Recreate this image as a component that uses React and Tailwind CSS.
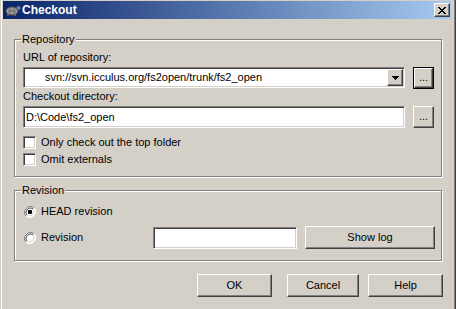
import React from "react";

const raised =
  "border border-t-white border-l-white border-r-[#404040] border-b-[#404040] shadow-[inset_-1px_-1px_0_#808080] bg-[#d4d0c8]";
const sunken =
  "border border-t-[#808080] border-l-[#808080] border-r-white border-b-white shadow-[inset_1px_1px_0_#404040,inset_-1px_-1px_0_#d4d0c8] bg-white";

function Turtle() {
  return (
    <svg width="16" height="14" viewBox="0 0 16 14">
      <ellipse cx="7" cy="8" rx="6" ry="4" fill="#9a9a9a" stroke="#505050" strokeWidth="1" />
      <path d="M3 8h8M5 5.5v5M9 5.5v5" stroke="#6a6a6a" strokeWidth="1" />
      <circle cx="13.5" cy="5" r="2" fill="#7a8aa8" stroke="#404a60" strokeWidth="0.8" />
      <rect x="2" y="11" width="2" height="2" fill="#606060" />
      <rect x="9" y="11" width="2" height="2" fill="#606060" />
    </svg>
  );
}

function CloseGlyph() {
  return (
    <svg width="8" height="7" viewBox="0 0 8 7" shapeRendering="crispEdges">
      <path
        d="M0 0h2v1h-2zM6 0h2v1h-2zM1 1h2v1h-2zM5 1h2v1h-2zM2 2h4v1h-4zM3 3h2v1h-2zM2 4h4v1h-4zM1 5h2v1h-2zM5 5h2v1h-2zM0 6h2v1h-2zM6 6h2v1h-2z"
        fill="#000"
      />
    </svg>
  );
}

function Group({ label, className, children }) {
  return (
    <div
      className={
        "relative ml-[14px] w-[428px] border border-[#808080] shadow-[inset_1px_1px_0_#fff,1px_1px_0_#fff] " +
        className
      }
    >
      <div className="absolute left-[6px] -top-[7px] bg-[#d4d0c8] px-[1px] leading-[13px]">{label}</div>
      {children}
    </div>
  );
}

function Checkbox({ label }) {
  return (
    <div className="flex h-[13px] items-center">
      <div className={"h-[13px] w-[13px] " + sunken} />
      <span className="ml-[5px] leading-[13px]">{label}</span>
    </div>
  );
}

function Radio({ checked }) {
  return (
    <svg width="12" height="12" viewBox="0 0 12 12" className="ml-[1px]">
      <circle cx="6" cy="6" r="5.5" fill="#fff" />
      <path d="M10.2 1.8A6 6 0 0 0 1.8 10.2" stroke="#808080" strokeWidth="1" fill="none" />
      <path d="M9.2 2.8A4.6 4.6 0 0 0 2.8 9.2" stroke="#404040" strokeWidth="1" fill="none" />
      <path d="M10.2 1.8A6 6 0 0 1 1.8 10.2" stroke="#ffffff" strokeWidth="1" fill="none" />
      <path d="M9.2 2.8A4.6 4.6 0 0 1 2.8 9.2" stroke="#d4d0c8" strokeWidth="1" fill="none" />
      {checked && <rect x="4" y="4" width="4" height="4" rx="1" fill="#000" />}
    </svg>
  );
}

export default function App() {
  return (
    <div className="relative h-[309px] w-[456px] overflow-hidden bg-[#d4d0c8] font-['Liberation_Sans',Arial,sans-serif] text-[11px] leading-[13px] text-black shadow-[inset_1px_0_0_#d4d0c8,inset_2px_0_0_#fff,inset_-1px_0_0_#404040,inset_-2px_0_0_#808080]">
      {/* Title bar */}
      <div className="ml-[3px] mt-[1px] flex h-[18px] w-[448px] items-center bg-[linear-gradient(to_right,#0a246a,#a6caf0)]">
        <div className="ml-[2px] flex items-center">
          <Turtle />
        </div>
        <span className="ml-[1px] text-[12px] font-bold leading-[14px] text-white">Checkout</span>
        <div className={"ml-auto mr-[1px] flex h-[14px] w-[16px] items-center justify-center " + raised}>
          <CloseGlyph />
        </div>
      </div>

      {/* Repository group */}
      <Group label="Repository" className="mt-[20px] h-[138px] pl-[8px] pt-[11px]">
        <div>URL of repository:</div>
        <div className="mt-[3px] flex items-start">
          <div className={"flex h-[21px] w-[382px] items-center " + sunken}>
            <span className="flex-1 pl-[21px]">svn://svn.icculus.org/fs2open/trunk/fs2_open</span>
            <div className={"mr-[1px] flex h-[17px] w-[16px] items-center justify-center " + raised}>
              <svg width="7" height="4" viewBox="0 0 7 4" shapeRendering="crispEdges">
                <path d="M0 0h7v1h-7zM1 1h5v1h-5zM2 2h3v1h-3zM3 3h1v1h-1z" fill="#000" />
              </svg>
            </div>
          </div>
          <div className="ml-[8px] h-[22px] w-[21px] border border-black">
            <div className={"flex h-full w-full items-center justify-center pb-[2px] " + raised}>...</div>
          </div>
        </div>
        <div className="mt-[1px]">Checkout directory:</div>
        <div className="mt-[3px] flex items-start">
          <div className={"flex h-[22px] w-[382px] items-center " + sunken}>
            <span className="pl-[2px]">D:\Code\fs2_open</span>
          </div>
          <div className={"ml-[8px] flex h-[22px] w-[21px] items-center justify-center pb-[2px] " + raised}>...</div>
        </div>
        <div className="mt-[8px]">
          <Checkbox label="Only check out the top folder" />
        </div>
        <div className="mt-[4px]">
          <Checkbox label="Omit externals" />
        </div>
      </Group>

      {/* Revision group */}
      <Group label="Revision" className="mt-[13px] h-[71px] pl-[8px] pt-[14px]">
        <div className="flex h-[13px] items-center">
          <Radio checked />
          <span className="ml-[5px]">HEAD revision</span>
        </div>
        <div className="mt-[8px] flex h-[23px] items-center">
          <div className="flex w-[130px] items-center">
            <Radio />
            <span className="ml-[5px]">Revision</span>
          </div>
          <div className={"h-[22px] w-[144px] " + sunken} />
          <div className={"ml-[8px] flex h-[23px] w-[130px] items-center justify-center " + raised}>Show log</div>
        </div>
      </Group>

      {/* Bottom buttons */}
      <div className="mt-[13px] flex">
        <div className={"ml-[197px] flex h-[23px] w-[75px] items-center justify-center " + raised}>OK</div>
        <div className={"ml-[15px] flex h-[23px] w-[72px] items-center justify-center " + raised}>Cancel</div>
        <div className={"ml-[9px] flex h-[23px] w-[75px] items-center justify-center " + raised}>Help</div>
      </div>
    </div>
  );
}
